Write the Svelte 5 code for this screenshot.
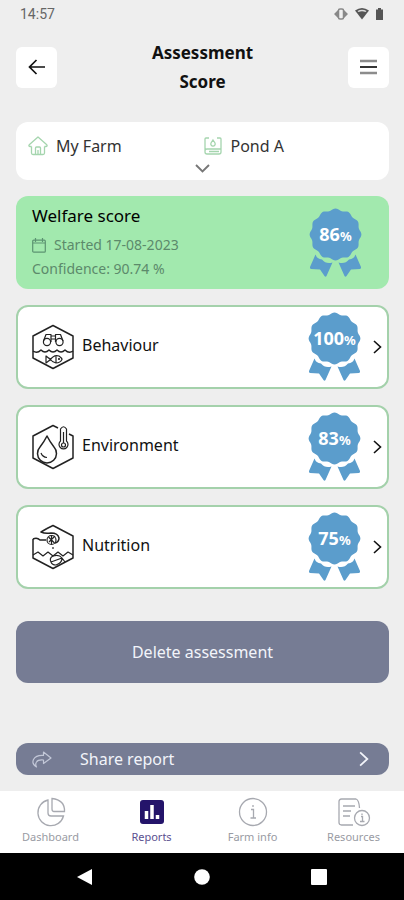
<script>
  const scores = [
    { name: 'Behaviour', value: 100 },
    { name: 'Environment', value: 83 },
    { name: 'Nutrition', value: 75 }
  ];

  const tabs = ['Dashboard', 'Reports', 'Farm info', 'Resources'];
  const active = 'Reports';

  // Twelve-lobed rosette outline, centred on 26.5,26.5
  const rosette = (() => {
    const points = [];
    for (let a = 0; a < 360; a += 3) {
      const t = (a * Math.PI) / 180;
      const r = 25 + 0.9 * Math.cos(12 * t);
      points.push(`${(26.5 + r * Math.cos(t)).toFixed(2)} ${(26.5 + r * Math.sin(t)).toFixed(2)}`);
    }
    return `M${points.join('L')}Z`;
  })();
</script>

{#snippet badge(value)}
  <span class="badge">
    <svg width="53" height="70" viewBox="0 0 53 70" fill="#5b9dcc" aria-hidden="true">
      <path d={rosette} />
      <path d="M6.500 46.500Q8 51 13 51.500Q17 56.500 23.500 54.500L17.500 68Q16.500 69.500 15.500 68L11 61.500L2 61Q.5 60.500 1 59Z" />
      <path d="M46.500 46.500Q45 51 40 51.500Q36 56.500 29.500 54.500L35.500 68Q36.500 69.500 37.500 68L42 61.500L51 61Q52.500 60.500 52 59Z" />
    </svg>
    <span class="figure">{value}<small>%</small></span>
  </span>
{/snippet}

{#snippet chevron(size)}
  <svg class="chevron" width={size} height={size * 2} viewBox="0 0 9 18" fill="none" stroke="currentColor" stroke-width="1.6" aria-hidden="true">
    <path d="M1 3L7.500 9L1 15" />
  </svg>
{/snippet}

<div class="screen">
  <div class="status">
    <span>14:57</span>
    <svg width="50" height="16" viewBox="0 0 50 16" aria-hidden="true">
      <path d="M0 8L5 3V13ZM14 8L9 3V13Z" fill="#888" />
      <rect x="4.500" y="3" width="5" height="10" rx="1.500" fill="#efefef" stroke="#888" stroke-width="1.500" />
      <path d="M21 4.500Q28 -.5 35 4.500L28 13.500Z" fill="#555" />
      <path d="M23.500 5Q28 2.500 32.500 5L31.500 6Q28 4.500 24.500 6Z" fill="#ddd" />
      <path d="M42 3.500H44V2H47V3.500H49V14H42Z" fill="#555" />
    </svg>
  </div>

  <header>
    <button class="square" aria-label="Back">
      <svg width="18" height="16" viewBox="0 0 18 16" fill="none" stroke="#111" stroke-width="1.700"><path d="M17 8H1.500M8.500 1L1.500 8L8.500 15" /></svg>
    </button>
    <h1>Assessment Score</h1>
    <button class="square" aria-label="Menu">
      <svg width="18" height="16" viewBox="0 0 18 16" fill="none"><path d="M0 2H17M0 14H17" stroke="#8c8c8c" stroke-width="2.500" /><path d="M0 8H17" stroke="#111" stroke-width="1.700" /></svg>
    </button>
  </header>

  <main>
    <button class="picker">
      <span class="places">
        <span class="place">
          <svg width="20" height="20" viewBox="0 0 20 20" fill="none" stroke="#a5d5ae" stroke-width="1.300" stroke-linejoin="round"><path d="M3.500 10.500V17Q3.500 18.500 5 18.500H15Q16.500 18.500 16.500 17V10.500M3.500 10.500H2Q0 10 1.500 8.500L10 1L18.500 8.500Q20 10 18 10.500H16.500" /><path d="M7.500 18.500V12Q7.500 11 8.500 11H11.500Q12.500 11 12.500 12V18.500M10 14V18" /></svg>
          My Farm
        </span>
        <span class="place">
          <svg width="20" height="20" viewBox="0 0 20 20" fill="none" stroke="#a5d5ae" stroke-width="1.300"><path d="M6 2H3Q2 2 2 3V16Q2 18 4 18H16Q18 18 18 16V3Q18 2 17 2H14M2 15Q2 13 4 13H18M6 15.500H16" /><path d="M10 4L12 7A2.200 2.200 0 1 1 8 7Z" /></svg>
          Pond A
        </span>
      </span>
      <svg width="15" height="9" viewBox="0 0 15 9" fill="none" stroke="#777" stroke-width="1.900"><path d="M1 1L7.500 7.500L14 1" /></svg>
    </button>

    <section class="welfare">
      <div class="details">
        <h2>Welfare score</h2>
        <p>
          <svg width="14" height="15" viewBox="0 0 14 15" fill="none" stroke="#5c9472" stroke-width="1.200"><rect x=".7" y="2.200" width="12.600" height="12" rx="1" /><path d="M3.500 0V4M10.500 0V4M1 5H13" /></svg>
          Started 17-08-2023
        </p>
        <p>Confidence: 90.74 %</p>
      </div>
      {@render badge(86)}
    </section>

    {#each scores as score}
      <button class="card">
        <svg class="topic" width="44" height="46" viewBox="0 0 44 46" fill="none" stroke="#222" stroke-width="1.500" stroke-linejoin="round" aria-hidden="true">
          {#if score.name === 'Behaviour'}
            <path d="M22 1.500L42 12V34L22 44.500L2 34V12Z" />
            <path d="M2 27Q6 30 10 26Q14 30 18 26Q22 30 26 26Q30 30 34 26Q38 30 42 27" />
            <g stroke-width="1.200">
              <circle cx="16" cy="18" r="3.600" /><circle cx="28.500" cy="18" r="3.600" />
              <path d="M12.500 17L15 10.500H20V18M32 17L29.500 10.500H24.500V18M20 12H24.500M20 15H24.500" />
              <path d="M15 32V39L19.500 35.500ZM18 37Q23 30 28 32Q31 34 31 35.500Q29 39 25 39Q21 38 18 34M25 32.500V38.500" />
              <circle cx="28" cy="35" r=".5" />
            </g>
          {:else if score.name === 'Environment'}
            <path d="M27 4L22 1.500L2 12V34L22 44.500L42 34V12L38 10" />
            <path d="M16 12Q19 18 23 23A9.500 9.500 0 1 1 9 23Q13 18 16 12Z" />
            <path d="M10 29Q11.500 33 16 33.500" stroke-width="1.200" />
            <path d="M29.500 17V5Q32.500 .5 35.500 5V17A4.500 4.500 0 1 1 29.500 17Z" stroke-width="1.200" />
            <circle cx="32.500" cy="21" r="2" stroke-width="1.200" /><path d="M32.500 8V19" stroke-width="1.200" />
          {:else}
            <path d="M16 4.500L22 1.500L42 12V34L22 44.500L2 34V15" />
            <path d="M2 15Q6 13 9 16H15M16 4.500L10 8Q14 10 20 9Q27 9 28 14Q28 18 24 19" />
            <path d="M2 31L7 28L12 32L17 28L22 32L27 28L32 32L37 28L42 31" stroke-width="1.200" />
            <g stroke-width="1.200"><circle cx="20.500" cy="16" r="4.500" /><path d="M17.500 13L23.500 19M24 12L18 18M20.500 11V20" /><path d="M22 23V25" /><path d="M20 38Q18 34 22 32Q28 30 31 34Q31 39 25 41Q21 41 20 38ZM20 38L31 34M31 34L34 38" /></g>
          {/if}
        </svg>
        <span class="name">{score.name}</span>
        {@render badge(score.value)}
        {@render chevron(9)}
      </button>
    {/each}

    <button class="delete">Delete assessment</button>

    <button class="share">
      <svg width="20" height="17" viewBox="0 0 20 17" fill="none" stroke="#c3c8d8" stroke-width="1.200" stroke-linejoin="round"><path d="M11.500 1L19 7L11.500 12.500V9Q6 8.500 4.500 11Q3 13 4.500 16Q-.5 13 1.500 8.500Q4 4 11.500 4.500Z" /></svg>
      <span>Share report</span>
      {@render chevron(10)}
    </button>
  </main>

  <nav>
    {#each tabs as tab}
      <a href="#{tab}" class:active={tab === active}>
        <svg width="34" height="30" viewBox="0 0 34 30" fill="none" stroke="#a7a9b0" stroke-width="1.300" aria-hidden="true">
          {#if tab === 'Dashboard'}
            <path d="M14 3A13 13 0 1 0 29.500 19H17Q14 19 14 16Z" />
            <path d="M18 1.500V12Q18 14.500 20 14.500H30.500Q31 3 18 1.500Z" />
          {:else if tab === 'Reports'}
            <rect x="5" y="3" width="24" height="24" rx="3" fill="#24146a" stroke="none" />
            <path d="M11.500 22V14M17 22V8M22.500 22V18" stroke="#fff" stroke-width="3.500" />
          {:else if tab === 'Farm info'}
            <circle cx="17" cy="15" r="13.500" />
            <path d="M15 12.500H17.500V21M14.500 21H20M17 8V10" />
          {:else}
            <path d="M16 28H4.500Q2 28 2 25.500V4.500Q2 2 4.500 2H19Q22 3 22.500 11M6 9H18M6 14H14M6 19H13" />
            <circle cx="25" cy="21" r="7.500" /><path d="M24 19.500H25.500V24.500M23 24.500H27.500M25 16.500V18" />
          {/if}
        </svg>
        {tab}
      </a>
    {/each}
  </nav>

  <div class="system">
    <button aria-label="System back"><svg width="16" height="16" viewBox="0 0 16 16"><path d="M15 0V16L0 8Z" fill="#fff" /></svg></button>
    <button aria-label="Home"><svg width="16" height="16" viewBox="0 0 16 16"><circle cx="8" cy="8" r="7.800" fill="#fff" /></svg></button>
    <button aria-label="Recent apps"><svg width="16" height="16" viewBox="0 0 16 16"><rect width="16" height="16" rx="1" fill="#fff" /></svg></button>
  </div>
</div>

<style>
  :global(body) {
    margin: 0;
    background: #eee;
  }
  .screen {
    display: flex;
    flex-direction: column;
    min-height: 100vh;
    font-family: "Noto Sans", "Open Sans", sans-serif;
    font-size: 16px;
    line-height: 24px;
    color: #111;
    background: #eee;
  }
  button {
    border: 0;
    padding: 0;
    font: inherit;
    color: inherit;
    cursor: pointer;
  }
  svg {
    display: block;
    flex: none;
  }
  .status {
    display: flex;
    align-items: center;
    justify-content: space-between;
    height: 28px;
    padding: 0 20px;
    font-family: Roboto, sans-serif;
    font-size: 14px;
    color: #666;
  }
  header {
    display: flex;
    align-items: center;
    justify-content: space-between;
    padding: 10px 15px 26px 16px;
  }
  .square {
    display: flex;
    align-items: center;
    justify-content: center;
    width: 41px;
    height: 41px;
    border-radius: 6px;
    background: #fff;
  }
  h1 {
    width: 120px;
    margin: 0;
    text-align: center;
    font-size: 17px;
    line-height: 29px;
    font-weight: 700;
  }
  main {
    display: flex;
    flex-direction: column;
    flex: 1;
    gap: 16px;
    padding: 0 15px 16px 16px;
  }
  .picker {
    display: flex;
    flex-direction: column;
    align-items: center;
    gap: 6px;
    padding: 12px 12px 7px;
    border-radius: 12px;
    background: #fff;
    color: #333;
  }
  .places {
    display: flex;
    width: 100%;
  }
  .place {
    display: flex;
    flex: 1;
    align-items: center;
    gap: 8px;
  }
  .welfare {
    display: flex;
    justify-content: space-between;
    padding: 8px 27px 8px 16px;
    border-radius: 12px;
    background: #a2e9ae;
  }
  h2 {
    margin: 0 0 5px;
    font-size: 17px;
    line-height: 24px;
    font-weight: 400;
    color: #000;
  }
  p {
    display: flex;
    align-items: center;
    gap: 8px;
    margin: 0;
    font-size: 14px;
    color: #5c8a6b;
  }
  .badge {
    position: relative;
    flex: none;
    height: 70px;
  }
  .welfare .badge {
    margin-top: 4px;
  }
  .figure {
    position: absolute;
    inset: 0 0 auto;
    display: flex;
    align-items: baseline;
    justify-content: center;
    font-size: 18px;
    line-height: 52px;
    font-weight: 700;
    color: #fff;
  }
  small {
    font-size: 13px;
  }
  .card {
    display: flex;
    align-items: center;
    padding: 5px 5px 5px 13px;
    border: 2px solid #a4d1ab;
    border-radius: 12px;
    background: #fff;
    text-align: left;
  }
  .name {
    flex: 1;
    padding: 0 0 4px 7px;
  }
  .card .chevron {
    margin-left: 12px;
  }
  .delete,
  .share {
    border-radius: 12px;
    background: #767c94;
    color: #f2f4fa;
  }
  .delete {
    margin-top: 16px;
    padding: 19px 16px;
  }
  .share {
    display: flex;
    align-items: center;
    margin-top: auto;
    padding: 4px 20px 4px 16px;
    text-align: left;
  }
  .share span {
    flex: 1;
    padding-left: 28px;
  }
  nav {
    display: flex;
    background: #fff;
  }
  a {
    display: flex;
    flex: 1;
    flex-direction: column;
    align-items: center;
    gap: 2px;
    padding: 6px 0 8px;
    font-size: 11px;
    line-height: 16px;
    color: #999ba3;
    text-decoration: none;
  }
  a.active {
    color: #5b5090;
  }
  .system {
    display: flex;
    align-items: center;
    justify-content: center;
    gap: 101px;
    height: 47px;
    background: #000;
  }
  .system button {
    background: none;
  }
</style>
